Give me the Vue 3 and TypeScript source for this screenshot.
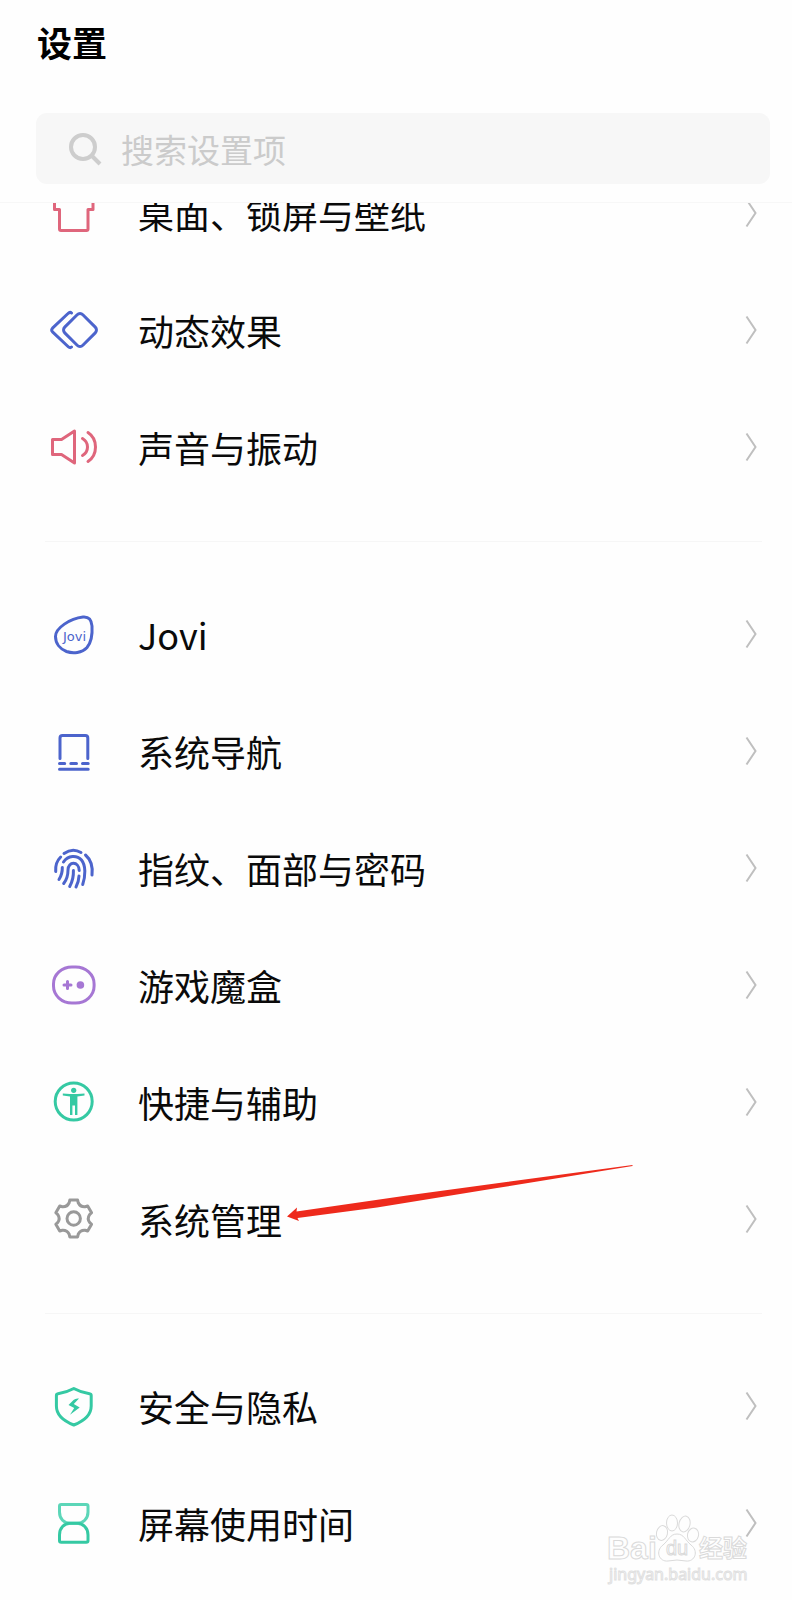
<script setup lang="ts">
import { ref } from 'vue'

type IconName =
  | 'shirt' | 'motion' | 'sound' | 'jovi' | 'nav' | 'finger'
  | 'game' | 'access' | 'gear' | 'shield' | 'hourglass'

interface Item {
  icon: IconName
  label: string
  marked?: boolean
}

const query = ref('')

const groups: Item[][] = [
  [
    { icon: 'shirt', label: '桌面、锁屏与壁纸' },
    { icon: 'motion', label: '动态效果' },
    { icon: 'sound', label: '声音与振动' },
  ],
  [
    { icon: 'jovi', label: 'Jovi' },
    { icon: 'nav', label: '系统导航' },
    { icon: 'finger', label: '指纹、面部与密码' },
    { icon: 'game', label: '游戏魔盒' },
    { icon: 'access', label: '快捷与辅助' },
    { icon: 'gear', label: '系统管理', marked: true },
  ],
  [
    { icon: 'shield', label: '安全与隐私' },
    { icon: 'hourglass', label: '屏幕使用时间' },
  ],
]

// Point on a circle around the gear's centre, angle in degrees.
function polar(angle: number, radius: number): string {
  const a = (angle * Math.PI) / 180
  return `${(23.7 + radius * Math.cos(a)).toFixed(2)} ${(23.5 + radius * Math.sin(a)).toFixed(2)}`
}

// Six-toothed outline with concave valleys.
function gearPath(): string {
  let d = ''
  for (let k = 0; k < 6; k++) {
    const c = k * 60 - 90
    d += `${k === 0 ? 'M' : 'L'}${polar(c - 12, 18.8)}L${polar(c + 12, 18.8)}`
    d += `L${polar(c + 16, 16.4)}Q${polar(c + 30, 13.2)} ${polar(c + 44, 16.4)}`
  }
  return d + 'Z'
}
const gear = gearPath()
</script>

<template>
  <div class="page">
    <header class="head">
      <h1 class="title">设置</h1>
      <label class="search">
        <svg class="search-icon" viewBox="0 0 34 34" aria-hidden="true">
          <circle cx="15" cy="15" r="12" />
          <path d="M23 23L32 32" />
        </svg>
        <input v-model="query" type="text" placeholder="搜索设置项" aria-label="搜索设置项" />
      </label>
    </header>

    <main class="list">
      <template v-for="(group, g) in groups" :key="g">
        <hr v-if="g > 0" class="divider" />
        <ul class="group">
          <li v-for="item in group" :key="item.label" class="cell">
            <button type="button" class="row">
              <svg class="icon" :class="item.icon" viewBox="0 0 48 48" aria-hidden="true">
                <template v-if="item.icon === 'shirt'">
                  <path d="M4.500 12L15 5Q24 17 33 5L43 12V20.500H38V40Q38 41.500 36.500 41.500H11Q9.500 41.500 9.500 40V20.500H4.500Z" />
                </template>
                <template v-else-if="item.icon === 'motion'">
                  <rect x="17.200" y="11.200" width="25.600" height="25.600" rx="4" transform="rotate(45 30 24)" />
                  <path d="M21.500 7Q20 5.500 18 7.500L2.500 22.200Q.9 24 2.500 25.800L18 40.500Q20 42.500 21.500 41" />
                </template>
                <template v-else-if="item.icon === 'sound'">
                  <path d="M2.500 16.500H11.500L24.500 8V40L11.500 31.500H2.500Z" />
                  <path d="M32.500 15.500Q37.500 18.500 37.500 24T32.500 32.500" />
                  <path d="M38 9.500Q45.500 14.500 45.500 24T38 38.500" />
                </template>
                <template v-else-if="item.icon === 'jovi'">
                  <path d="M5.500 26.500C5.500 18 20 8.500 33 7C39 6.500 41.500 10 42 16C42.500 24 42 31.500 37 37.500C32 43 23 43.800 16.500 41.500C10 39 5.500 33.500 5.500 26.500Z" />
                  <text x="24.500" y="30.500" text-anchor="middle">Jovi</text>
                </template>
                <template v-else-if="item.icon === 'nav'">
                  <path d="M10 31.500V11Q10 8.500 12.500 8.500H35.300Q37.800 8.500 37.800 11V31.500" />
                  <path d="M9.500 36.500H14.700M20.800 36.500H26.500M32.500 36.500H38.200M9.500 42.200H38.200" />
                </template>
                <template v-else-if="item.icon === 'finger'">
                  <path d="M5.700 27.500Q5 18.500 10.700 13" />
                  <path d="M14 9.500Q22.500 3.500 31 8.500" />
                  <path d="M35.500 11Q43.500 18 42 31" />
                  <path d="M13.500 18C18 11 27 11 31.500 16C36 21.500 35.500 32 32.700 40.500" />
                  <path d="M12.300 23.500Q12.500 30 9 35.500" />
                  <path d="M13.700 39.500Q18 34 18 26C18 17 29 17 29.200 26.500" />
                  <path d="M29 32Q28.800 37.500 26 43" />
                  <path d="M23.400 26.500Q23.800 35 19.700 42.500" />
                </template>
                <template v-else-if="item.icon === 'game'">
                  <rect x="3.500" y="6" width="40.600" height="36" rx="18.500" ry="17" />
                  <path d="M14 24H21M17.500 20.500V27.500" />
                  <circle class="solid" cx="30.400" cy="24" r="3.800" />
                </template>
                <template v-else-if="item.icon === 'access'">
                  <circle cx="23.700" cy="23.500" r="18.500" />
                  <circle class="solid" cx="23.700" cy="12.300" r="2.600" />
                  <path class="solid" d="M12.800 15.600L20 16H27.400L34.500 15.600V17.600L27.400 18.600V37H25V27.500H22.400V37H20V18.600L12.800 17.600Z" />
                </template>
                <template v-else-if="item.icon === 'gear'">
                  <path :d="gear" />
                  <circle cx="23.700" cy="23.500" r="6.700" />
                </template>
                <template v-else-if="item.icon === 'shield'">
                  <path d="M23.800 6.500Q31 10.500 39.500 11.700Q41.200 12 41.200 13.500V24C41.200 33 34 39 23.800 43C13.500 39 6.400 33 6.400 24V13.500Q6.400 12 8 11.700Q16.500 10.500 23.800 6.500Z" />
                  <path class="solid" d="M29 16.500Q25.500 16 23.500 18L18.500 23L24.200 26L20 32.800L29.700 25.500L23.800 22Z" />
                </template>
                <template v-else>
                  <path class="pale" d="M9.500 7.300Q9.500 5.500 11.200 5.500H36.300Q38 5.500 38 7.300V13C38 20 33 24.300 27 24.300H20.500C14 24.300 9.500 20 9.500 13Z" />
                  <path d="M9.500 41.500Q9.500 43.300 11.200 43.300H36.300Q38 43.300 38 41.500V36C38 29 33 24.300 27 24.300H20.500C14 24.300 9.500 29 9.500 36Z" />
                </template>
              </svg>
              <span class="label">{{ item.label }}</span>
              <svg class="chevron" viewBox="0 0 12 30" aria-hidden="true">
                <path d="M1.500 1.500L10.500 15L1.500 28.500" />
              </svg>
            </button>
            <svg v-if="item.marked" class="arrow" viewBox="0 0 346 62" aria-hidden="true">
              <path d="M0 55.500L10 46.500L9.500 50.500L120 34.500L345.500 4V5L210 27L90 46.500L10.500 57L12 60Z" />
            </svg>
          </li>
        </ul>
      </template>
    </main>

    <svg class="watermark" viewBox="0 0 150 76" aria-hidden="true">
      <g class="mark">
        <text x="3" y="51" class="latin">Bai</text>
        <ellipse cx="58" cy="25" rx="5.500" ry="7.500" transform="rotate(12 58 25)" />
        <ellipse cx="68" cy="15" rx="5.500" ry="8" />
        <ellipse cx="80.500" cy="16" rx="5.500" ry="8" transform="rotate(14 80.500 16)" />
        <ellipse cx="89" cy="27" rx="5.500" ry="7" transform="rotate(14 89 27)" />
        <path d="M73 26C80 26 81 32 87 37C95 43 91 54 82 53Q73 51 64 53C55 54 51 43 59 37C65 32 66 26 73 26Z" />
        <text x="62" y="47" class="du">du</text>
        <text x="95" y="49" class="han">经验</text>
      </g>
      <text x="5" y="72" class="url">jingyan.baidu.com</text>
    </svg>
  </div>
</template>

<style>
body {
  margin: 0;
  background: #fefefe;
}
</style>

<style scoped>
.page {
  position: relative;
  min-height: 100vh;
  overflow: hidden;
  background: #fefefe;
  color: #0a0a0a;
  font-family: "Noto Sans CJK SC", "Noto Sans", sans-serif;
}
.head {
  position: relative;
  z-index: 1;
  padding: 16px 22px 18px 36px;
  border-bottom: 1px solid #f7f7f7;
  background: #fefefe;
}
.title {
  margin: 0 0 45px;
  padding-left: 1px;
  font-size: 35px;
  line-height: 52px;
  font-weight: 700;
  color: #000;
}
.search {
  display: flex;
  align-items: center;
  gap: 19px;
  height: 71px;
  padding: 0 32px;
  border-radius: 11px;
  background: #f7f7f7;
}
.search-icon {
  flex: none;
  width: 34px;
  height: 34px;
  fill: none;
  stroke: #cdcdcd;
  stroke-width: 4;
}
.search input {
  flex: 1;
  min-width: 0;
  height: 52px;
  padding: 0;
  border: 0;
  outline: 0;
  background: none;
  font: inherit;
  font-size: 33px;
  color: #0a0a0a;
}
.search input::placeholder {
  color: #cbcbcb;
  opacity: 1;
}
.list {
  margin-top: -48px;
}
.group {
  margin: 0;
  padding: 0;
  list-style: none;
}
.cell {
  position: relative;
}
.row {
  display: flex;
  align-items: center;
  width: 100%;
  height: 117px;
  padding: 0 35px 1px 50px;
  border: 0;
  background: none;
  color: inherit;
  font: inherit;
  text-align: left;
  cursor: pointer;
}
.label {
  flex: 1;
  margin-left: 40px;
  font-size: 36px;
  line-height: 54px;
}
.divider {
  height: 1px;
  margin: 35px 30px 34px 45px;
  border: 0;
  background: #f6f6f6;
}
.icon {
  flex: none;
  width: 48px;
  height: 48px;
  fill: none;
  stroke: currentColor;
  stroke-width: 3;
  stroke-linecap: round;
  stroke-linejoin: round;
}
.icon .solid {
  fill: currentColor;
  stroke: none;
}
.icon text {
  fill: currentColor;
  stroke: none;
  font-family: "DejaVu Sans", sans-serif;
  font-size: 13px;
}
.shirt,
.sound {
  color: #df667c;
}
.motion,
.jovi,
.nav,
.finger {
  color: #4c64cc;
}
.game {
  color: #a677d4;
}
.access,
.shield,
.hourglass {
  color: #35c9a3;
}
.pale {
  stroke: #5cd6b8;
}
.gear {
  color: #999;
}
.chevron {
  flex: none;
  width: 12px;
  height: 30px;
  fill: none;
  stroke: #bfbfbf;
  stroke-width: 2;
}
.arrow {
  position: absolute;
  top: 0;
  left: 287px;
  width: 346px;
  height: 62px;
  fill: #ee2a1c;
  pointer-events: none;
}
.watermark {
  position: absolute;
  right: 38px;
  bottom: 16px;
  width: 150px;
  height: 76px;
  overflow: visible;
  pointer-events: none;
}
.mark {
  fill: #fefefe;
  stroke: #dadada;
  stroke-width: 1;
}
.latin,
.du {
  font-family: "Liberation Sans", Arial, sans-serif;
}
.latin {
  font-size: 32px;
  font-weight: 700;
}
.du {
  font-size: 20px;
}
.han {
  font-size: 24px;
  font-weight: 700;
}
.url {
  fill: #fefefe;
  stroke: #e0e0e0;
  stroke-width: 1;
  font-family: "Noto Sans", sans-serif;
  font-size: 16px;
}
</style>
